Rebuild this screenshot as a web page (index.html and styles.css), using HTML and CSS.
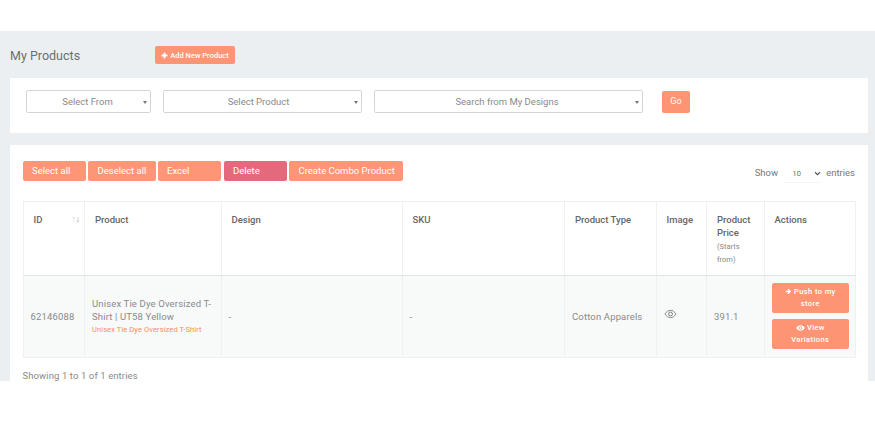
FILE: index.html
```html
<!DOCTYPE html>
<html lang="en">
<head>
    <meta charset="UTF-8">
    <title>My Products</title>
    <link rel="stylesheet" href="styles.css">
</head>
<body>
    <div class="page">
        <div class="page-head">
            <h1>My Products</h1>
            <a class="btn-add"><svg class="ico-plus" viewBox="0 0 10 10"><path d="M3.7 0.8h2.6v2.9h2.9v2.6H6.3v2.9H3.7V6.3H0.8V3.7h2.9z"/></svg>Add New Product</a>
        </div>

        <div class="card filters">
            <div class="select sel-from">Select From</div>
            <div class="select sel-product">Select Product</div>
            <div class="select sel-design">Search from My Designs</div>
            <a class="btn-go">Go</a>
        </div>

        <div class="card list">
            <div class="toolbar">
                <div class="tools">
                    <a class="tool w-select">Select all</a>
                    <a class="tool w-deselect">Deselect all</a>
                    <a class="tool w-excel">Excel</a>
                    <a class="tool tool-red w-delete">Delete</a>
                    <a class="tool w-combo">Create Combo Product</a>
                </div>
                <div class="length">Show <span class="length-box">10<svg viewBox="0 0 8 6"><path d="M1 1.5l3 3 3-3" fill="none" stroke="#555" stroke-width="1.4"/></svg></span> entries</div>
            </div>

            <table class="products">
                <colgroup>
                    <col class="c-id"><col class="c-product"><col class="c-design"><col class="c-sku">
                    <col class="c-type"><col class="c-image"><col class="c-price"><col class="c-actions">
                </colgroup>
                <thead>
                    <tr>
                        <th class="th-id">ID<span class="sort"><i>↑</i>↓</span></th>
                        <th>Product</th>
                        <th>Design</th>
                        <th>SKU</th>
                        <th>Product Type</th>
                        <th>Image</th>
                        <th>Product Price <small>(Starts from)</small></th>
                        <th>Actions</th>
                    </tr>
                </thead>
                <tbody>
                    <tr>
                        <td>62146088</td>
                        <td>Unisex Tie Dye Oversized T-Shirt | UT58 Yellow<span class="sub">Unisex Tie Dye Oversized T-Shirt</span></td>
                        <td>-</td>
                        <td>-</td>
                        <td>Cotton Apparels</td>
                        <td class="td-eye"><svg viewBox="0 0 14 10" class="ico-eye"><path d="M1 5C3 2.2 4.8 1 7 1s4 1.2 6 4c-2 2.8-3.800 4-6 4S3 7.800 1 5z" fill="none" stroke="#666" stroke-width="0.8"/><circle cx="7" cy="5" r="2.100" fill="none" stroke="#666" stroke-width="0.9"/></svg></td>
                        <td>391.1</td>
                        <td class="td-actions">
                            <a class="act"><svg class="ico-small" viewBox="0 0 10 10"><path d="M1 3.900h4.200L3.500 2.200 4.700 1 8.900 5 4.700 9 3.500 7.800l1.700-1.700H1z"/></svg> Push to my store</a>
                            <a class="act"><svg class="ico-small ico-wide" viewBox="0 0 12 8"><path fill-rule="evenodd" d="M0.300 4C1.800 1.600 3.700 0.400 6 0.400S10.200 1.600 11.700 4C10.200 6.400 8.300 7.600 6 7.600S1.800 6.400 0.300 4zM6 1.800a2.200 2.200 0 1 0 0 4.400a2.200 2.200 0 1 0 0-4.400z"/><circle cx="6" cy="4" r="1.200"/></svg> View Variations</a>
                        </td>
                    </tr>
                </tbody>
            </table>

            <div class="info">Showing 1 to 1 of 1 entries</div>
        </div>
    </div>
</body>
</html>
```

FILE: styles.css
```css
* {
    box-sizing: border-box;
}
html, body {
    height: 438px;
    overflow: hidden;
}
body {
    margin: 0;
    padding-top: 31px;
    background: #fff;
    font-family: Roboto, "Liberation Sans", sans-serif;
    color: #777;
}
.page {
    height: 350px;
    padding: 0 7px 0 10px;
    background: #ebeff2;
    overflow: hidden;
}
.page-head {
    display: flex;
    align-items: center;
    height: 47px;
    padding-top: 1px;
}
h1 {
    width: 145px;
    margin: 0;
    font-size: 12.5px;
    font-weight: 400;
    color: #6b6f73;
}
.btn-add {
    display: flex;
    align-items: center;
    justify-content: center;
    width: 80px;
    height: 18px;
    background: #fd9474;
    border-radius: 2px;
    color: #fff;
    font-size: 7.5px;
    font-weight: 500;
}
.ico-plus {
    width: 7px;
    height: 7px;
    margin-right: 2px;
    fill: #fff;
}
.card {
    background: #fff;
}
.filters {
    display: flex;
    align-items: flex-start;
    height: 55px;
    padding: 12px 0 0 16px;
}
.select {
    position: relative;
    height: 23px;
    border: 1px solid #d3d5d7;
    border-radius: 2px;
    font-size: 9.5px;
    line-height: 21px;
    text-align: center;
    color: #8a8a8a;
}
.select::after {
    content: "";
    position: absolute;
    right: 3px;
    top: 10px;
    border: 2.500px solid transparent;
    border-top: 3px solid #777;
}
.sel-from {
    width: 125px;
    margin-right: 12px;
    padding-right: 2px;
}
.sel-product {
    width: 199px;
    margin-right: 12px;
    padding-right: 8px;
}
.sel-design {
    width: 269px;
    margin-right: 19px;
    padding-right: 3px;
}
.btn-go {
    width: 28px;
    height: 22px;
    margin-top: 1px;
    background: #fd9474;
    border-radius: 2px;
    color: #fff;
    font-size: 9px;
    line-height: 21px;
    text-align: center;
}
.list {
    height: 236px;
    margin-top: 12px;
    padding: 16px 13px 0 12.500px;
}
.toolbar {
    display: flex;
    justify-content: space-between;
    height: 39.500px;
}
.tools {
    display: flex;
    height: 20px;
}
.tool {
    height: 20px;
    margin-right: 2px;
    padding-left: 9.500px;
    background: #fd9474;
    border-radius: 2px;
    color: #fff;
    font-size: 9.500px;
    line-height: 20px;
    opacity: 0.98;
}
.tool-red {
    background: #e4677b;
}
.w-select { width: 63.500px; }
.w-deselect { width: 67.500px; }
.w-excel { width: 63.500px; margin-right: 2.500px; }
.w-delete { width: 63.500px; }
.w-combo { width: 114px; }
.length {
    display: flex;
    align-items: flex-start;
    height: 22px;
    padding-top: 6px;
    font-size: 9.500px;
    color: #777;
    word-spacing: 0;
}
.length-box {
    position: relative;
    width: 36px;
    height: 16px;
    margin: 0 5px 0 7px;
    padding-left: 7px;
    border-bottom: 1px solid #f3f3f3;
    font-size: 8px;
    line-height: 13px;
}
.length-box svg {
    position: absolute;
    right: 0;
    top: 4px;
    width: 7px;
    height: 5px;
}
.products {
    width: 832.500px;
    table-layout: fixed;
    border-collapse: collapse;
}
.c-id { width: 61.500px; }
.c-product { width: 136.500px; }
.c-design { width: 181px; }
.c-sku { width: 162.500px; }
.c-type { width: 91.500px; }
.c-image { width: 50.500px; }
.c-price { width: 57.500px; }
.c-actions { width: 91.500px; }
.products th,
.products td {
    border: 1px solid #eef0f1;
}
.products th {
    height: 74.500px;
    padding: 11px 10px 0;
    vertical-align: top;
    text-align: left;
    font-size: 9.500px;
    font-weight: 500;
    line-height: 13.500px;
    color: #666;
    border-bottom: 1px solid #e3e6e8;
}
.products th small {
    display: block;
    font-size: 7.500px;
    font-weight: 400;
    line-height: 13px;
    color: #888;
}
.th-id {
    position: relative;
}
.sort {
    position: absolute;
    right: 4px;
    top: 11px;
    font-size: 8.500px;
    font-weight: 400;
    color: #888;
}
.sort i {
    font-style: normal;
    color: #ccc;
}
.products td {
    height: 81.500px;
    padding: 0 7px;
    background: #f8f9f9;
    font-size: 9.500px;
    line-height: 13px;
    color: #8a8a8a;
    letter-spacing: 0.15px;
}
.sub {
    display: block;
    font-size: 7.500px;
    color: #fb8c5c;
    letter-spacing: 0.1px;
}
.td-eye {
    vertical-align: middle;
}
.ico-eye {
    display: block;
    width: 13px;
    height: 10px;
    margin: -4px 0 0 0;
}
.products .td-actions {
    padding: 0 6px 0 7px;
}
.act {
    display: block;
    height: 30px;
    margin-bottom: 6px;
    padding: 3px 8px;
    background: #fd9474;
    border-radius: 2px;
    color: #fff;
    font-size: 7.500px;
    font-weight: 500;
    line-height: 12px;
    text-align: center;
    letter-spacing: 0.4px;
}
.act:last-child {
    margin-bottom: 0;
}
.ico-small {
    width: 7px;
    height: 7px;
    fill: #fff;
    vertical-align: -0.5px;
}
.ico-wide {
    width: 9px;
    height: 6px;
}
.info {
    margin-top: 12px;
    font-size: 9.500px;
    line-height: 11px;
    color: #8a8a8a;
    letter-spacing: 0.1px;
}
```
